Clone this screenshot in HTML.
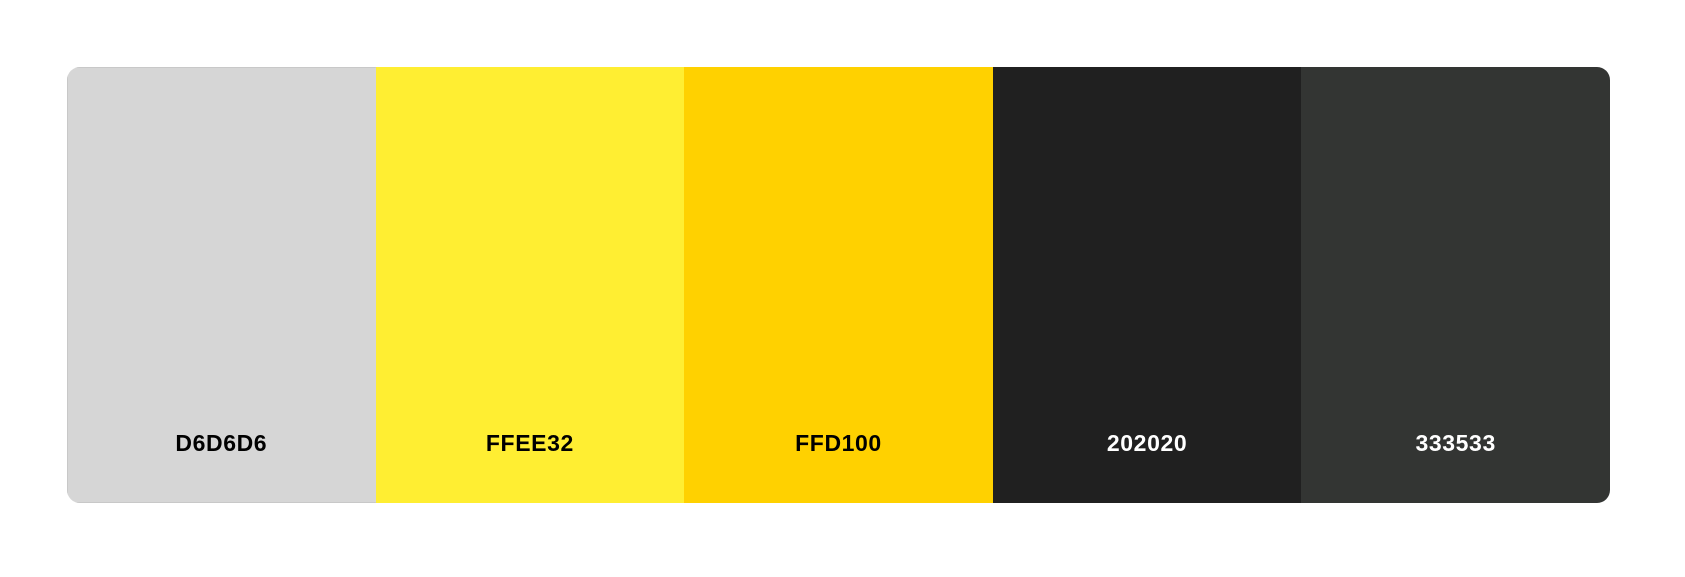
<!DOCTYPE html>
<html><head><style>
html,body{margin:0;padding:0;background:#fff;width:1685px;height:577px;overflow:hidden}
.pal{position:absolute;left:67px;top:67px;width:1543px;height:436px;border-radius:13px;overflow:hidden;display:flex}
.pal div{flex:1;position:relative;font-family:"Liberation Sans",sans-serif;font-weight:bold;font-size:23px;letter-spacing:0.6px}
.pal span{position:absolute;left:0;right:0;text-align:center;top:363px}
</style></head><body>
<div class="pal">
<div style="background:#d6d6d6;color:#000;box-shadow:inset 1px 0 0 #c8c8c8,inset 0 1px 0 #c8c8c8,inset 0 -1px 0 #c8c8c8"><span>D6D6D6</span></div>
<div style="background:#ffee32;color:#000"><span>FFEE32</span></div>
<div style="background:#ffd100;color:#000"><span>FFD100</span></div>
<div style="background:#202020;color:#fff"><span>202020</span></div>
<div style="background:#333533;color:#fff"><span>333533</span></div>
</div>
</body></html>
